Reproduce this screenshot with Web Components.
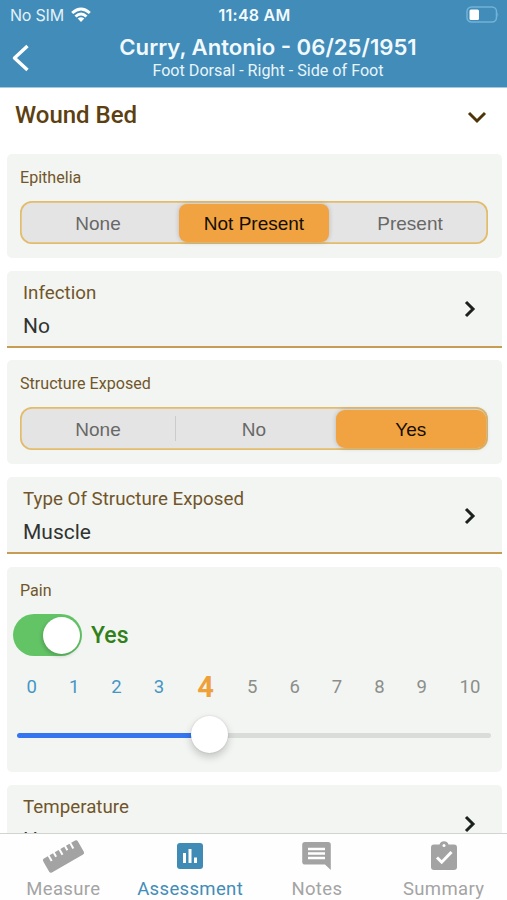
<!DOCTYPE html>
<html lang="en">
<head>
<meta charset="utf-8">
<title>Wound Assessment</title>
<style>
html,body{margin:0;height:100%;background:#fff}
body{overflow:hidden}
</style>
</head>
<body>
<wound-app></wound-app>
<script>
const define = (name, html, setup) => customElements.define(name, class extends HTMLElement {
  constructor() {
    super();
    const t = document.createElement('template');
    t.innerHTML = html;
    this.attachShadow({mode: 'open'}).append(t.content.cloneNode(true));
  }
  connectedCallback() { if (setup) setup(this, this.shadowRoot); }
});

define('status-bar', `<style>
:host{display:grid;grid-template-columns:1fr auto 1fr;align-items:center;height:30px;padding:0 8px 0 10px;box-sizing:border-box;color:#fff;font:400 16px/30px Inter,sans-serif}
.l{display:flex;align-items:center;gap:7px;color:#e3f1f9;letter-spacing:-.2px}
.t{font-weight:600;font-size:16px;letter-spacing:.25px;color:#f2fafe}
.r{justify-self:end;display:flex}
svg{display:block}
</style>
<div class="l"><span>No SIM</span><svg width="20" height="16" viewBox="0 0 20 16" fill="none" stroke="#fff" stroke-width="3"><path d="M1.2 6Q10-1.9 18.8 6M4.5 9.5Q10 4.6 15.500 9.500"/><path d="M10 15l-3.300-3.400Q10 8.800 13.300 11.600z" fill="#fff" stroke="none"/></svg></div>
<div class="t">11:48 AM</div>
<div class="r"><svg width="33" height="18" viewBox="0 0 33 18"><rect x="1" y="1" width="29.500" height="15" rx="4.500" fill="none" stroke="#73b3d8" stroke-width="1.500"/><path d="M31.500 6q1.500 2.500 0 5z" fill="#73b3d8"/><rect x="3.500" y="3.500" width="9.500" height="10.500" rx="1.500" fill="#fff"/></svg></div>`);

define('patient-header', `<style>
:host{display:block;height:87px;background:#418cb8;border-bottom:1px solid #a5c9df;box-sizing:content-box;color:#fff;flex:none}
.bar{display:grid;grid-template-columns:60px 1fr 31px;height:57px}
svg{align-self:start;margin:14px 0 0 11px}
.c{text-align:center;white-space:nowrap;display:flex;flex-direction:column;align-items:center}
.n{font:600 22.150px/28px Inter,sans-serif;margin-top:3px;color:#f1f9fe}
.s{font:400 16.150px/20px Roboto,sans-serif;color:#e8f4fb}
</style>
<status-bar></status-bar>
<div class="bar"><svg width="20" height="28" viewBox="0 0 20 28" fill="none" stroke="#fff" stroke-width="3.400" stroke-linejoin="round"><path d="M16.500 2L3.500 14L16.500 26"/></svg>
<div class="c"><div class="n"><slot name="name"></slot></div><div class="s"><slot></slot></div></div></div>`);

define('section-title', `<style>
:host{display:flex;height:66px;box-sizing:border-box;padding:11.500px 20px 0 15px;justify-content:space-between;align-items:flex-start;color:#5c4011;font:500 24px/31px Roboto,sans-serif}
svg{margin-top:10.500px}
</style><span><slot></slot></span><svg width="20" height="16" viewBox="0 0 20 16" fill="none" stroke="#503409" stroke-width="3"><path d="M2 3l8 8 8-8"/></svg>`);

define('form-card', `<style>
:host{display:block;background:#f3f5f2;border-radius:5px;box-sizing:border-box;height:103.500px;padding:13px 14px 0 13.500px}
.l{font:400 16.100px/21.500px Roboto,sans-serif;color:#71552b;height:20px}
</style><div class="l"></div><slot></slot>`, (h, r) => r.querySelector('.l').textContent = h.getAttribute('label'));

define('segment-control', `<style>
:host{display:grid;grid-template-columns:repeat(3,1fr);width:468px;height:43px;box-shadow:inset 0 0 0 1.700px #e3bc6b;border-radius:12px;background:#e4e4e4;margin-top:14px;font:400 19px/39px "Liberation Sans",sans-serif;color:#686868;text-align:center}
div{display:flex;align-items:center}
span{flex:1;border-radius:8px;height:38px}
div.on span{background:#f0a340;color:#150d03;box-shadow:0 0 5px #0003;margin:0 3px}
div.on:last-child span{margin:0 2px 0 3.500px;border-radius:9px}
div.sep{background:linear-gradient(#cbcbcb,#cbcbcb) right center/1px 25px no-repeat}
</style>`, (h, r) => {
  const on = +h.getAttribute('selected');
  h.getAttribute('options').split('|').forEach((o, i) => {
    const d = document.createElement('div'), s = document.createElement('span');
    s.textContent = o; d.append(s);
    if (i === on) d.className = 'on';
    else if (i < 2 && i + 1 !== on && i + 1 < on) d.className = 'sep';
    r.append(d);
  });
});

define('select-row', `<style>
:host{display:flex;justify-content:space-between;align-items:center;background:#f3f5f2;border-radius:5px 5px 0 0;border-bottom:2px solid #c99c53;height:77px;box-sizing:border-box;padding:0 25px 0 16.500px;font-family:Roboto,sans-serif}
.l{font-size:18.750px;line-height:24px;color:#71552b;margin-top:3px}
.v{font-size:21px;line-height:26px;color:#303331;margin-top:8px}
svg{margin-top:2px}
</style><div><div class="l"></div><div class="v"><slot></slot></div></div>
<svg width="14" height="20" viewBox="0 0 14 20" fill="none" stroke="#1d211e" stroke-width="3"><path d="M3 3l7 7L3 17"/></svg>`, (h, r) => r.querySelector('.l').textContent = h.getAttribute('label'));

define('toggle-switch', `<style>
:host{display:flex;align-items:center;gap:9px;height:42px;margin:14px 0 0 -7px;color:#318019;font:500 23px/42px Roboto,sans-serif}
.t{width:69px;height:42px;border-radius:21px;background:#63c466;display:flex;justify-content:flex-end;align-items:center;box-sizing:border-box;padding-right:2px}
.k{width:37px;height:37px;border-radius:50%;background:#fff;box-shadow:-1px 2px 4px #0003}
span{padding-top:2px}
</style><div class="t"><div class="k"></div></div><span><slot></slot></span>`);

define('pain-scale', `<style>
:host{display:block;font:400 18.500px/30px Roboto,sans-serif;color:#8b8e8b;margin-top:16px}
.n{display:grid;grid-template-columns:repeat(4,42.400px) 51px repeat(5,42.400px) 54px;text-align:center;margin-left:-9.500px;height:30px}
.past{color:#4596c5}
.now{color:#eea03a;font-weight:700;font-size:29px}
.track{height:5px;border-radius:3px;margin:31px -3px 0 -3px;background:linear-gradient(90deg,#3476ef 190px,#d9dcd8 190px);display:flex;align-items:center;padding-left:174px}
.k{width:37px;height:37px;border-radius:50%;background:#fff;box-shadow:0 4px 9px #0003,0 0 2px #0002;flex:none;margin-top:-3px}
</style><div class="n"></div><div class="track"><div class="k"></div></div>`, (h, r) => {
  const v = +h.getAttribute('value');
  for (let i = 0; i <= 10; i++) {
    const s = document.createElement('span');
    s.textContent = i;
    s.className = i < v ? 'past' : i === v ? 'now' : '';
    r.querySelector('.n').append(s);
  }
});

define('tab-item', `<style>
:host{display:flex;flex-direction:column;align-items:center;color:#a4a4a4;font:400 18.500px/24px Roboto,sans-serif;padding-top:2px;letter-spacing:.35px}
:host([active]){color:#418cb8}
div{height:41px;display:flex;align-items:center}
</style><div><slot name="icon"></slot></div><span><slot></slot></span>`);

define('tab-bar', `<style>
:host{display:grid;grid-template-columns:repeat(4,1fr);height:67px;box-sizing:border-box;border-top:1.500px solid #d2d4d2;background:#fefefe;flex:none}
svg{display:block}
svg.up{margin-top:-2px}
</style>
<tab-item><svg slot="icon" width="46" height="36" viewBox="0 0 46 36"><g transform="translate(23.500 17.500) rotate(-30)"><path fill="#a3a3a3" d="M-18-8h4.500v6h2v-6h4v4.500h2v-4.500h4.500v6h2v-6h4.500v4.500h2v-4.500h4v6h2v-6H18a2 2 0 0 1 2 2V6a2 2 0 0 1-2 2H-18a2 2 0 0 1-2-2V-6a2 2 0 0 1 2-2z"/></g></svg>Measure</tab-item>
<tab-item active><svg slot="icon" class="up" width="26" height="26" viewBox="0 0 26 26"><rect width="26" height="26" rx="3" fill="#3f8bb6"/><path fill="#fff" d="M6 10h3v10H6zM11.500 6h3v14h-3zM17 14.500h3V20h-3z"/></svg>Assessment</tab-item>
<tab-item><svg slot="icon" class="up" width="29" height="28" viewBox="0 0 29 28"><path fill="#a3a3a3" d="M3 0h23a2.800 2.800 0 0 1 2.800 2.800V28L23 22.500H3A2.800 2.800 0 0 1 .2 19.700V2.800A2.800 2.800 0 0 1 3 0z"/><path stroke="#fff" stroke-width="2.500" d="M6 7h17M6 11.500h17M6 16h17"/></svg>Notes</tab-item>
<tab-item><svg slot="icon" class="up" width="26" height="30" viewBox="0 0 26 30"><path fill="#a3a3a3" d="M3 3.500h5.500a4.800 4.800 0 0 1 9 0H23a3 3 0 0 1 3 3V26a3 3 0 0 1-3 3H3a3 3 0 0 1-3-3V6.500a3 3 0 0 1 3-3z"/><circle cx="13" cy="4.500" r="1.500" fill="#fff"/><path fill="none" stroke="#fff" stroke-width="3" d="M6 16.500l4.700 4.700L20.500 11"/></svg>Summary</tab-item>`);

define('wound-app', `<style>
:host{display:flex;flex-direction:column;width:507px;height:900px;background:#fff;overflow:hidden}
main{flex:1;min-height:0;overflow:hidden}
.list{display:flex;flex-direction:column;gap:13px;padding:0 5px 0 6.500px}
.list>*{flex:none}
.structure{margin-top:-.5px;height:104px}
.pain{height:205px}
</style>
<patient-header><span slot="name">Curry, Antonio - 06/25/1951</span>Foot Dorsal - Right - Side of Foot</patient-header>
<main><section-title>Wound Bed</section-title>
<div class="list">
<form-card label="Epithelia"><segment-control options="None|Not Present|Present" selected="1"></segment-control></form-card>
<select-row label="Infection">No</select-row>
<form-card class="structure" label="Structure Exposed"><segment-control options="None|No|Yes" selected="2"></segment-control></form-card>
<select-row label="Type Of Structure Exposed">Muscle</select-row>
<form-card class="pain" label="Pain"><toggle-switch>Yes</toggle-switch><pain-scale value="4"></pain-scale></form-card>
<select-row label="Temperature">Hot</select-row>
</div></main>
<tab-bar></tab-bar>`);
</script>
</body>
</html>
